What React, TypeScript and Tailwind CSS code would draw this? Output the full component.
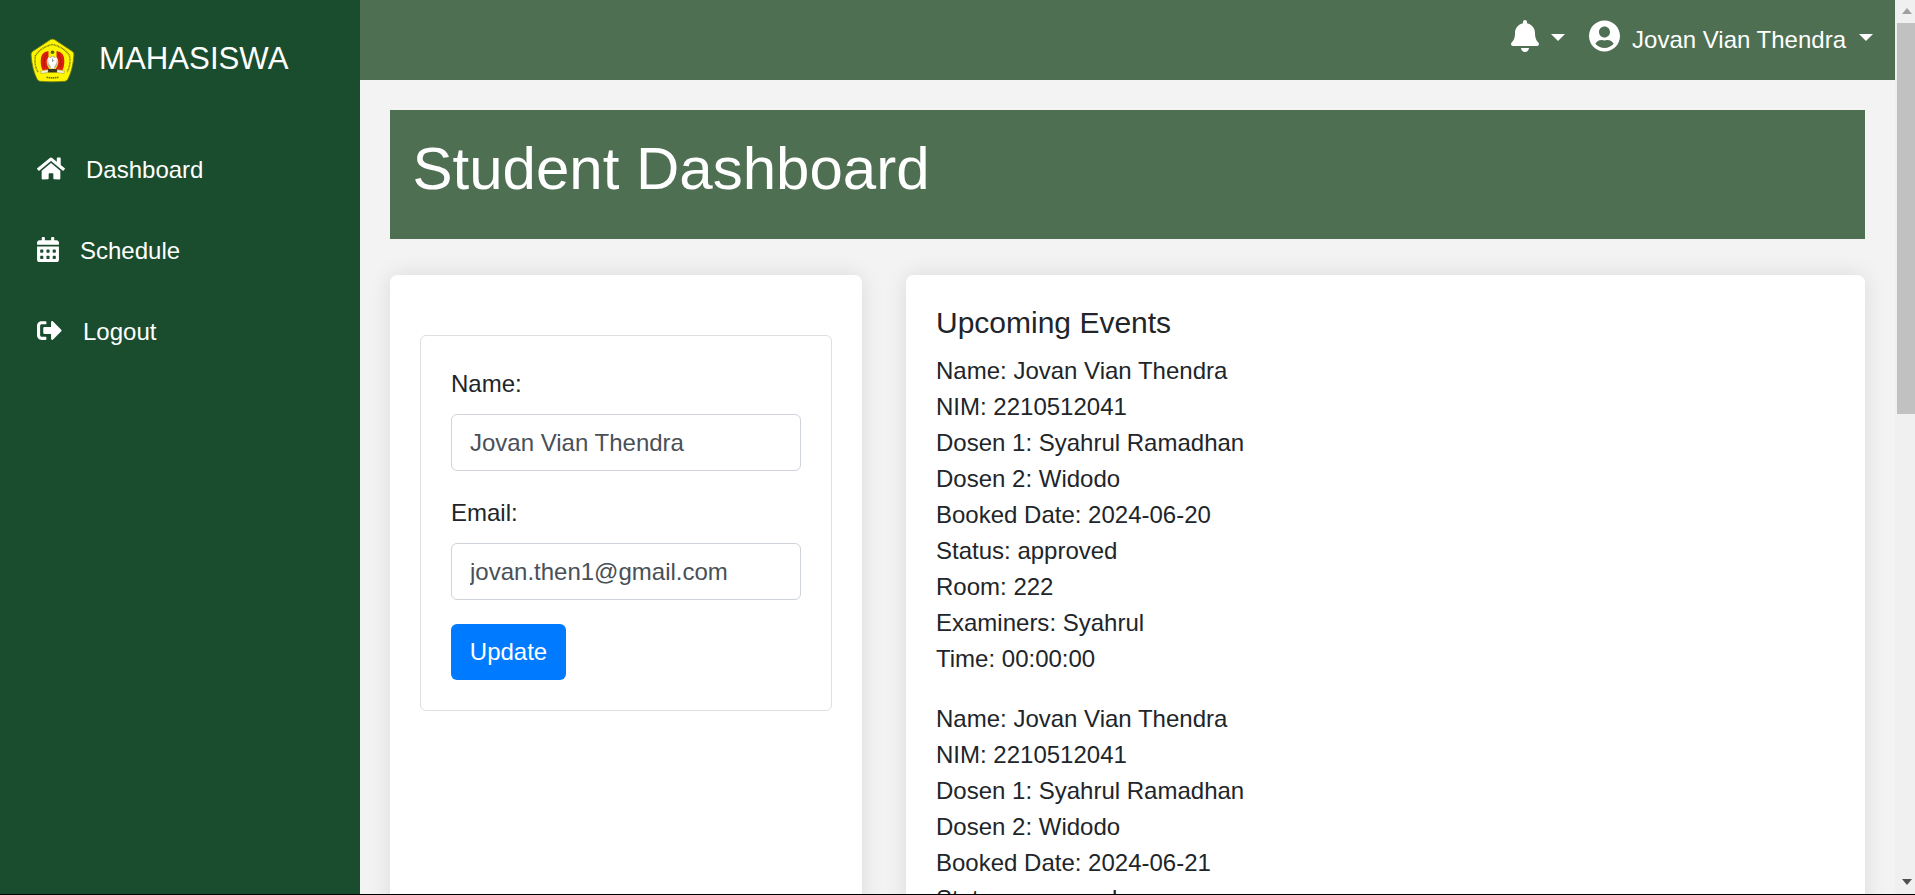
import type { ReactNode } from "react";
import {
  FaBell,
  FaCalendarAlt,
  FaHome,
  FaSignOutAlt,
  FaUserCircle,
} from "react-icons/fa";

const events = [
  {
    Name: "Jovan Vian Thendra",
    NIM: "2210512041",
    "Dosen 1": "Syahrul Ramadhan",
    "Dosen 2": "Widodo",
    "Booked Date": "2024-06-20",
    Status: "approved",
    Room: "222",
    Examiners: "Syahrul",
    Time: "00:00:00",
  },
  {
    Name: "Jovan Vian Thendra",
    NIM: "2210512041",
    "Dosen 1": "Syahrul Ramadhan",
    "Dosen 2": "Widodo",
    "Booked Date": "2024-06-21",
    Status: "approved",
  },
];

function Logo() {
  return (
    <svg viewBox="0 0 45 45" className="h-[45px] w-[45px] shrink-0">
      <path
        d="M20.5 1.6 Q22.5 0.6 24.5 1.6 L42.6 13.6 Q44.2 14.8 43.9 17 Q43 31 38 41 Q37.2 43 35 43.3 Q22.5 44.4 10 43.3 Q7.8 43 7 41 Q2 31 1.1 17 Q0.8 14.8 2.4 13.6Z"
        fill="#fdf502"
        stroke="#6f7a12"
        strokeWidth="0.8"
      />
      <path
        d="M8 34 Q3.8 27 5.5 17.5 Q12 8.5 22.5 6.500 Q33 8.500 39.500 17.500 Q41.200 27 37 34"
        fill="none"
        stroke="#77740a"
        strokeWidth="1.5"
        strokeDasharray="0.9 0.6"
      />
      <path d="M16.5 39.3 Q22.5 40.4 28.5 39.3" fill="none" stroke="#6d6a08" strokeWidth="1.6" strokeDasharray="1.5 0.6" />
      <path d="M18.5 13 Q10.5 14 10.7 23 Q10.8 29 12.5 32 L19.5 31.500 Q14.500 24 18.500 19Z" fill="#dd1c12" />
      <path d="M26.5 13 Q34.500 14 34.300 23 Q34.200 29 32.500 32 L25.500 31.500 Q30.500 24 26.500 19Z" fill="#dd1c12" />
      <path d="M14.500 29 Q12.500 22 17 15.500 M30.500 29 Q32.500 22 28 15.500" fill="none" stroke="#a81410" strokeWidth="0.8" />
      <circle cx="22.500" cy="14.200" r="1.800" fill="#49691b" />
      <ellipse cx="22.500" cy="24.500" rx="5" ry="6.500" fill="#b9b39c" />
      <path d="M18 19.500 L20.500 20 L22.500 18.800 L24.500 20 L27 19.500 L26.500 25 L24.500 28 L24 30.500 H21 L20.500 28 L18.500 25Z" fill="#fff" />
      <path d="M22.500 20.500V23.500M22.500 23.500L24.300 22" stroke="#777" strokeWidth="0.7" />
      <path d="M18 31h9v3.500H18z" fill="#3a3522" />
      <path d="M10.500 33 L18 31.800 V34.500 L11 35.500Z M34.500 33 L27 31.800 V34.500 L34 35.500Z" fill="#f4f2dc" stroke="#85802e" strokeWidth="0.4" />
    </svg>
  );
}

function Caret() {
  return (
    <span className="h-0 w-0 border-x-[7.2px] border-t-[7.2px] border-x-transparent border-t-white" />
  );
}

function NavItem({ icon, label }: { icon: ReactNode; label: string }) {
  return (
    <a className="flex h-[81px] items-center gap-[21px] pl-[37px]">
      {icon}
      <span>{label}</span>
    </a>
  );
}

function Field({ label, value }: { label: string; value: string }) {
  return (
    <div className="mb-6">
      <label className="mb-3 block">{label}</label>
      <input
        readOnly
        value={value}
        className="block h-[57px] w-full rounded-[6px] border border-[#ced4da] bg-white px-[18px] text-[#495057] outline-none"
      />
    </div>
  );
}

export default function App() {
  return (
    <div className="flex h-[895px] w-[1915px] flex-col overflow-hidden bg-black font-['Liberation_Sans',Arial,sans-serif] text-[24px] leading-[36px] text-[#212529]">
      <div className="flex h-[894px] overflow-hidden bg-[#f3f3f3]">
        <aside className="w-[360px] shrink-0 bg-[#1a4d2e] text-white">
          <div className="flex h-[129px] items-start pl-[30px] pt-[38px]">
            <Logo />
            <h2 className="ml-6 mt-[3px] text-[31.2px]">MAHASISWA</h2>
          </div>
          <nav>
            <NavItem icon={<FaHome className="mb-0.5 h-[25px] w-[28px]" />} label="Dashboard" />
            <NavItem icon={<FaCalendarAlt className="mb-0.5 h-[25px] w-[22px]" />} label="Schedule" />
            <NavItem icon={<FaSignOutAlt className="mb-0.5 h-[25px] w-[25px]" />} label="Logout" />
          </nav>
        </aside>

        <div className="flex w-[1535px] shrink-0 flex-col">
          <header className="flex h-20 shrink-0 items-start justify-end bg-[#4f6f52] pr-[22px] text-white">
            <FaBell className="mt-5 h-8 w-7" />
            <div className="ml-3 mt-[34px] flex">
              <Caret />
            </div>
            <FaUserCircle className="ml-6 mt-5 h-8 w-[31px]" />
            <span className="ml-3 mt-[22px]">Jovan Vian Thendra</span>
            <div className="ml-[13px] mt-[34px] flex">
              <Caret />
            </div>
          </header>

          <main className="flex min-h-0 flex-1 flex-col px-[30px] pt-[30px]">
            <div className="h-[129px] shrink-0 bg-[#4f6f52] px-[22.5px] pt-[22.5px] text-white">
              <h1 className="text-[60px] leading-[72px]">Student Dashboard</h1>
            </div>

            <div className="mt-9 flex items-start gap-11">
              <section className="h-[900px] w-[472px] shrink-0 rounded-[7.5px] bg-white px-[30px] pt-[60px] shadow-[0_0_22px_rgba(0,0,0,0.1)]">
                <form className="rounded-[6px] border border-[#dfdfdf] p-[30px]">
                  <Field label="Name:" value="Jovan Vian Thendra" />
                  <Field label="Email:" value="jovan.then1@gmail.com" />
                  <button
                    type="button"
                    className="block h-14 w-[115px] rounded-[6px] bg-[#007bff] text-center text-white"
                  >
                    Update
                  </button>
                </form>
              </section>

              <section className="h-[900px] flex-1 rounded-[7.5px] bg-white p-[30px] shadow-[0_0_22px_rgba(0,0,0,0.1)]">
                <h5 className="mb-3 text-[30px] leading-[36px]">Upcoming Events</h5>
                {events.map((event) => (
                  <div key={event["Booked Date"]} className="mb-6">
                    {Object.entries(event).map(([key, value]) => (
                      <p key={key}>
                        {key}: {value}
                      </p>
                    ))}
                  </div>
                ))}
              </section>
            </div>
          </main>
        </div>

        <div className="flex w-5 shrink-0 flex-col items-end bg-[#f0f0f0]">
          <svg viewBox="0 0 18 23" className="h-[23px] w-[18px] shrink-0">
            <path d="M5 14h10l-5-6z" fill="#a0a0a0" />
          </svg>
          <div className="h-[391px] w-[18px] bg-[#c1c1c1]" />
          <svg viewBox="0 0 18 23" className="mt-auto h-[23px] w-[18px] shrink-0">
            <path d="M5 8h10l-5 6z" fill="#505050" />
          </svg>
        </div>
      </div>
    </div>
  );
}
